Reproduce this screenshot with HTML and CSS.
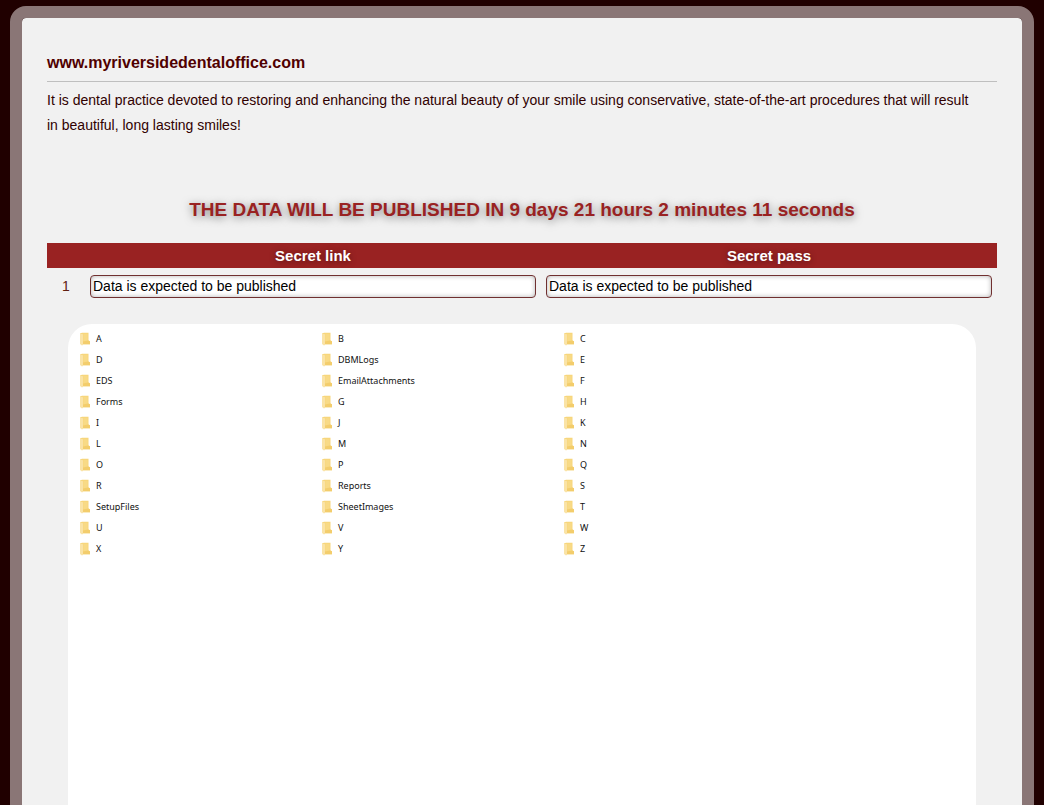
FILE: index.html
```html
<!DOCTYPE html>
<html lang="en">
<head>
  <meta charset="UTF-8">
  <meta name="viewport" content="width=device-width, initial-scale=1.0">
  <title>www.myriversidedentaloffice.com</title>
  <link rel="stylesheet" href="styles.css">
</head>
<body>
  <svg class="sprite" aria-hidden="true">
    <symbol id="folder" viewBox="0 0 12 14">
      <path d="M1 1.5l2-.8h6.5v7.8l1.5.8v3H4l-1 1z" fill="#f7d67c"/>
      <path d="M1 1.5l3 .8v10.5l-1 .7-2-1.4z" fill="#fae3a6"/>
      <path d="M4.5 2h4v7.5h-4z" fill="#f8da86"/>
      <path d="M4 9.5l5-1 2 .8v3H4z" fill="#f3cd6c"/>
    </symbol>
  </svg>

  <main class="panel">
    <h1 class="title">www.myriversidedentaloffice.com</h1>
    <p class="about">It is dental practice devoted to restoring and enhancing the natural beauty of your smile using conservative, state-of-the-art procedures that will result in beautiful, long lasting smiles!</p>

    <h2 class="timer">THE DATA WILL BE PUBLISHED IN 9 days 21 hours 2 minutes 11 seconds</h2>

    <table class="links">
      <thead>
        <tr>
          <th class="num"></th>
          <th id="link-head">Secret link</th>
          <th id="pass-head">Secret pass</th>
        </tr>
      </thead>
      <tbody>
        <tr>
          <td class="num">1</td>
          <td><input type="text" aria-labelledby="link-head" value="Data is expected to be published" readonly></td>
          <td><input type="text" aria-labelledby="pass-head" value="Data is expected to be published" readonly></td>
        </tr>
      </tbody>
    </table>

    <div class="listing">
      <ul class="folders">
        <li><svg><use href="#folder"/></svg>A</li>
        <li><svg><use href="#folder"/></svg>B</li>
        <li><svg><use href="#folder"/></svg>C</li>
        <li><svg><use href="#folder"/></svg>D</li>
        <li><svg><use href="#folder"/></svg>DBMLogs</li>
        <li><svg><use href="#folder"/></svg>E</li>
        <li><svg><use href="#folder"/></svg>EDS</li>
        <li><svg><use href="#folder"/></svg>EmailAttachments</li>
        <li><svg><use href="#folder"/></svg>F</li>
        <li><svg><use href="#folder"/></svg>Forms</li>
        <li><svg><use href="#folder"/></svg>G</li>
        <li><svg><use href="#folder"/></svg>H</li>
        <li><svg><use href="#folder"/></svg>I</li>
        <li><svg><use href="#folder"/></svg>J</li>
        <li><svg><use href="#folder"/></svg>K</li>
        <li><svg><use href="#folder"/></svg>L</li>
        <li><svg><use href="#folder"/></svg>M</li>
        <li><svg><use href="#folder"/></svg>N</li>
        <li><svg><use href="#folder"/></svg>O</li>
        <li><svg><use href="#folder"/></svg>P</li>
        <li><svg><use href="#folder"/></svg>Q</li>
        <li><svg><use href="#folder"/></svg>R</li>
        <li><svg><use href="#folder"/></svg>Reports</li>
        <li><svg><use href="#folder"/></svg>S</li>
        <li><svg><use href="#folder"/></svg>SetupFiles</li>
        <li><svg><use href="#folder"/></svg>SheetImages</li>
        <li><svg><use href="#folder"/></svg>T</li>
        <li><svg><use href="#folder"/></svg>U</li>
        <li><svg><use href="#folder"/></svg>V</li>
        <li><svg><use href="#folder"/></svg>W</li>
        <li><svg><use href="#folder"/></svg>X</li>
        <li><svg><use href="#folder"/></svg>Y</li>
        <li><svg><use href="#folder"/></svg>Z</li>
      </ul>
    </div>
  </main>
</body>
</html>
```
FILE: styles.css
```css
*, *::before, *::after {
  box-sizing: border-box;
}

body {
  margin: 0;
  padding: 6px 10px;
  background: #200000;
  color: #300000;
  font-family: "Liberation Sans", Arial, sans-serif;
  font-size: 14px;
  line-height: 25px;
}

.sprite {
  display: none;
}

.panel {
  padding: 32px 25px;
  background: #f1f1f1;
  background-clip: padding-box;
  border: 12px solid #8a7676;
  border-radius: 16px;
}

.title {
  margin: 0 0 6px;
  padding-bottom: 6px;
  border-bottom: 1px solid #bfbfbf;
  color: #500000;
  font-size: 16px;
}

.about {
  margin: 0;
  padding-right: 16px;
}

.timer {
  margin: 59px 0 21px;
  color: #992222;
  font-size: 19px;
  text-align: center;
  text-shadow: 0 2px 8px rgba(0, 0, 0, 0.5);
}

.links {
  width: 100%;
  border-collapse: collapse;
  table-layout: fixed;
}

.links th {
  padding: 0;
  background: #992222;
  color: #fff;
  font-size: 15px;
  text-shadow: 0 1px 6px rgba(0, 0, 0, 0.4);
}

.links td {
  padding: 7px 5px 0;
  line-height: 23px;
}

.links .num {
  width: 38px;
  color: #602010;
  text-align: center;
}

.links input {
  display: block;
  width: 100%;
  height: 23px;
  padding: 0 2px 1px;
  background: #fff;
  border: 1px solid #703030;
  border-radius: 4px;
  box-shadow: inset 0 0 5px rgba(0, 0, 0, 0.3);
  color: #000;
  font-family: inherit;
  font-size: 14px;
}

.listing {
  min-height: 640px;
  margin: 26px 21px 0;
  padding: 4px 11px;
  background: #fff;
  border-radius: 24px;
}

.folders {
  display: grid;
  grid-template-columns: repeat(3, 242px);
  grid-auto-rows: 21px;
  margin: 0;
  padding: 0;
  list-style: none;
  color: #111;
  font-family: "Noto Sans", "Open Sans", sans-serif;
  font-size: 9px;
}

.folders li {
  display: flex;
  align-items: center;
  gap: 5px;
}

.folders svg {
  width: 12px;
  height: 14px;
}
```
